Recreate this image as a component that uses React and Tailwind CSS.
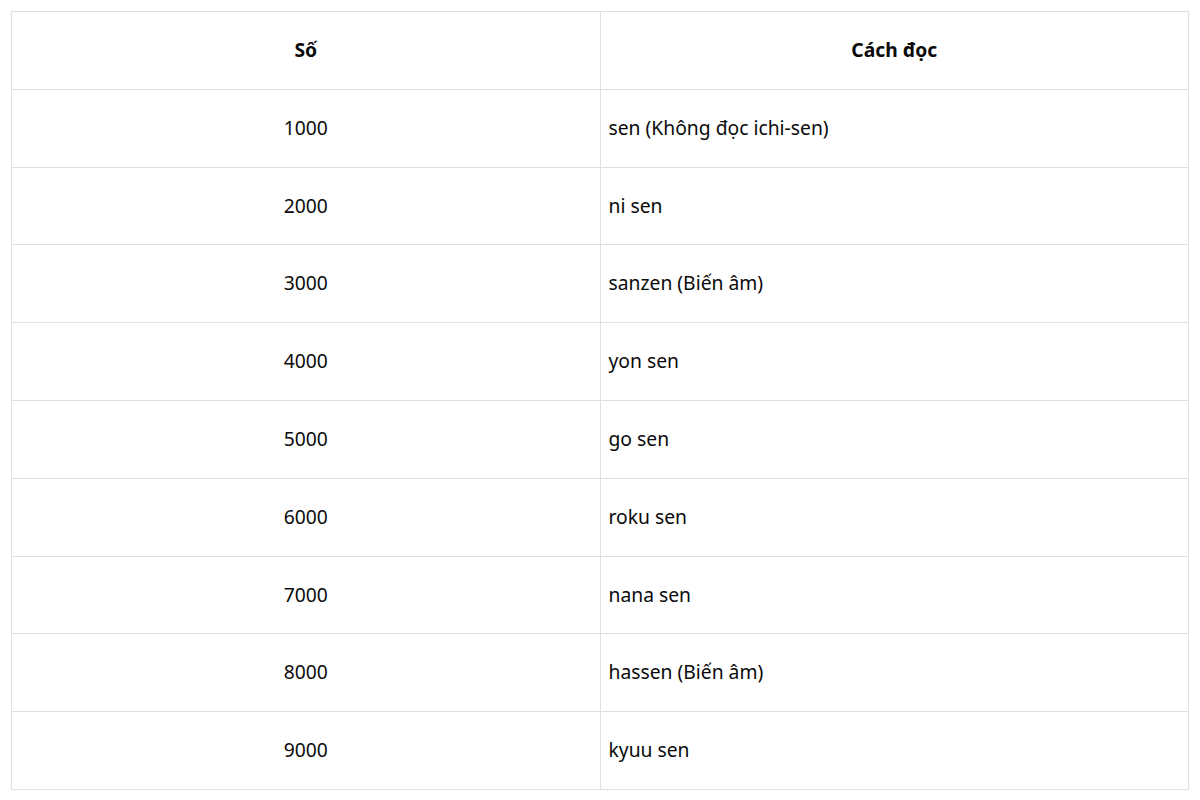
import React from "react";

const rows = [
  ["1000", "sen (Không đọc ichi-sen)"],
  ["2000", "ni sen"],
  ["3000", "sanzen (Biến âm)"],
  ["4000", "yon sen"],
  ["5000", "go sen"],
  ["6000", "roku sen"],
  ["7000", "nana sen"],
  ["8000", "hassen (Biến âm)"],
  ["9000", "kyuu sen"],
];

const App = () => {
  return (
    <div
      className="bg-white min-h-screen pt-[11px] px-[11px] text-[#0a0a0a]"
      style={{ fontFamily: '"Noto Sans", "Open Sans", sans-serif' }}
    >
      <table className="w-full border-collapse table-fixed text-[19.3px]">
        <thead>
          <tr className="h-[77.8px]">
            <th className="w-1/2 border border-[#e0e0e0] font-bold text-center">Số</th>
            <th className="w-1/2 border border-[#e0e0e0] font-bold text-center">Cách đọc</th>
          </tr>
        </thead>
        <tbody>
          {rows.map(([num, reading]) => (
            <tr key={num} className="h-[77.8px]">
              <td className="border border-[#e0e0e0] text-center">{num}</td>
              <td className="border border-[#e0e0e0] text-left px-2">{reading}</td>
            </tr>
          ))}
        </tbody>
      </table>
    </div>
  );
};

export default App;
